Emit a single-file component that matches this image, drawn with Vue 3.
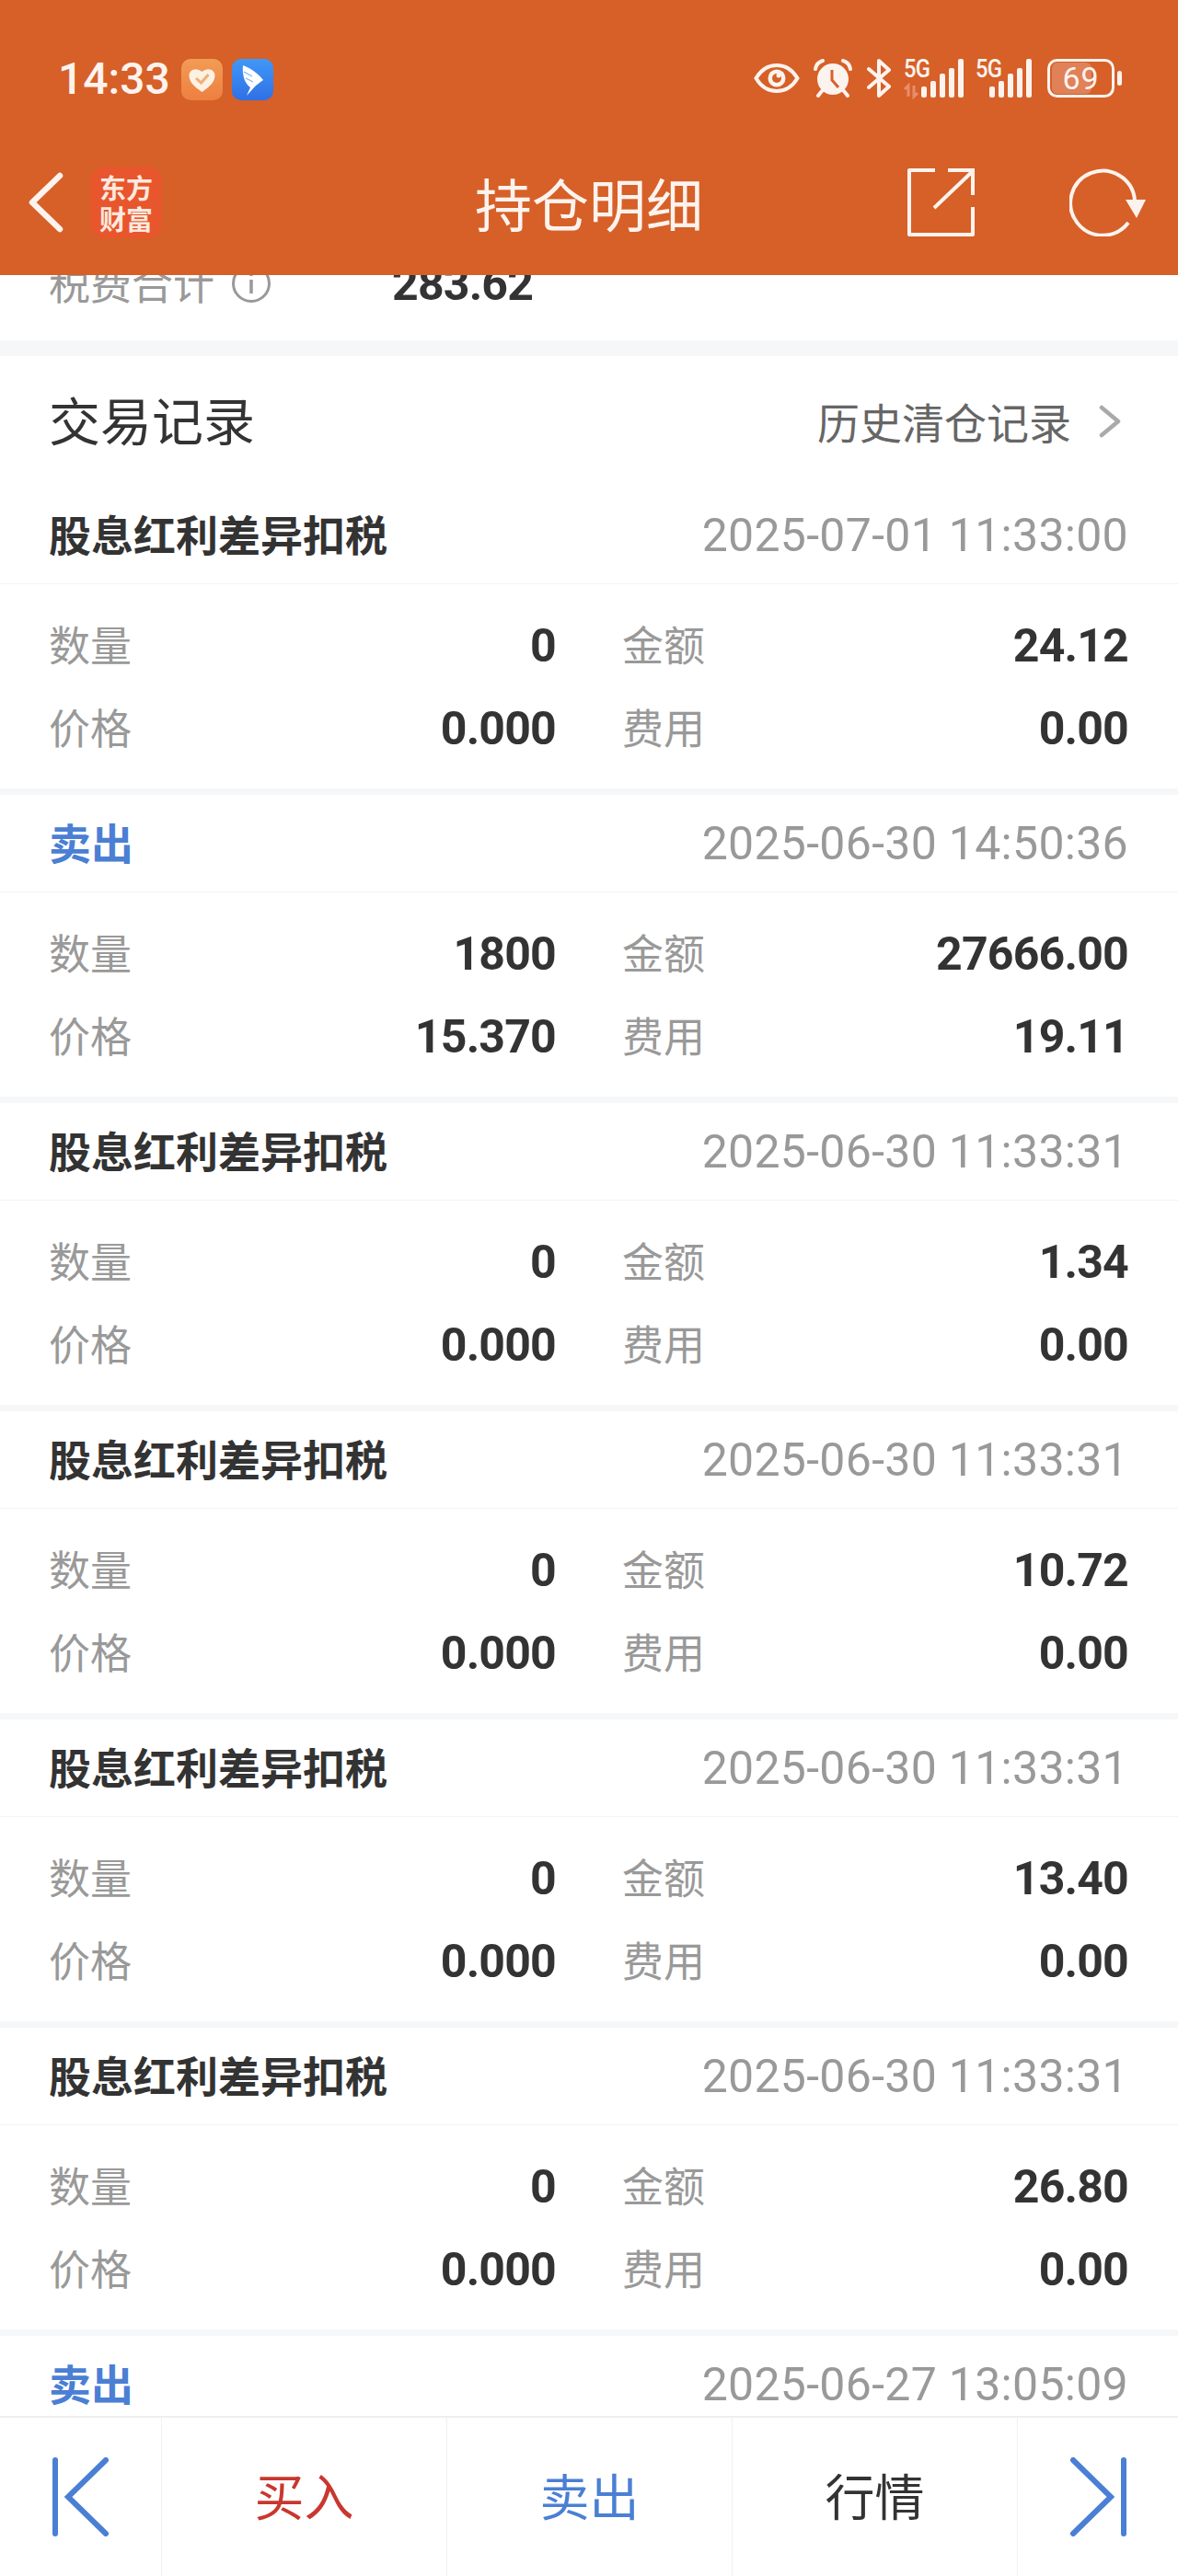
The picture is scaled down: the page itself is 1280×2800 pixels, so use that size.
<template>
  <div class="page">
    <header class="top">
      <div class="status">
        <div class="status-left">
          <span class="clock">14:33</span>
          <svg class="app-icon" viewBox="0 0 45 45">
            <defs>
              <linearGradient id="og" x1="0" y1="0" x2="0" y2="1"><stop offset="0" stop-color="#f29c56" /><stop offset="1" stop-color="#ee7f40" /></linearGradient>
            </defs>
            <rect width="45" height="45" rx="10" fill="url(#og)" />
            <path d="M22.5 36 C14 30 8.5 25 8.5 18 C8.5 12 16 8.5 22.5 14 C29 8.5 36.5 12 36.5 18 C36.5 25 31 30 22.5 36 Z" fill="#fdf1e4" />
            <path d="M16 21 L21.5 26 L29.5 17" fill="none" stroke="#efb075" stroke-width="3" />
          </svg>
          <svg class="app-icon" viewBox="0 0 45 45">
            <defs>
              <linearGradient id="bg" x1="0" y1="0" x2="0" y2="1"><stop offset="0" stop-color="#4098f6" /><stop offset="1" stop-color="#2f70e6" /></linearGradient>
            </defs>
            <rect width="45" height="45" rx="10" fill="url(#bg)" />
            <path d="M12 7 C20 10 29 16 34 23 C30 26 27 28 25 30 L16 40 L20 31 C14 27 11 18 12 7 Z" fill="#fff" />
            <path d="M13 14 L22 19 M15 21 L23 25" stroke="#7db4f7" stroke-width="1.2" />
          </svg>
        </div>
        <div class="status-right">
          <svg class="s-eye" viewBox="0 0 50 34">
            <path d="M2.5 17 C9 6 17 3 25 3 C33 3 41 6 47.5 17 C41 28 33 31 25 31 C17 31 9 28 2.5 17 Z" fill="none" stroke="#fdf3ee" stroke-width="4" />
            <circle cx="25" cy="17" r="9.5" fill="#fdf3ee" />
            <circle cx="25" cy="17" r="5" fill="#d66028" />
            <circle cx="27" cy="14" r="2.5" fill="#fdf3ee" />
          </svg>
          <svg class="s-alarm" viewBox="0 0 42 42">
            <circle cx="21" cy="22" r="17" fill="#fdf3ee" />
            <path d="M20 12 V23 L27 31" fill="none" stroke="#d66028" stroke-width="3" />
            <path d="M2 11 C3 6 6 3 10 2 M32 2 C36 3 39 6 40 11" fill="none" stroke="#fdf3ee" stroke-width="4" stroke-linecap="round" />
            <path d="M9 35 L5 40 M33 35 L37 40" stroke="#fdf3ee" stroke-width="4" stroke-linecap="round" />
          </svg>
          <svg class="s-bt" viewBox="0 0 28 42">
            <path d="M3 11 L25 30 L14 40 V2 L25 12 L3 31" fill="none" stroke="#fdf3ee" stroke-width="4" stroke-linejoin="round" stroke-linecap="round" />
          </svg>
          <svg class="s-signal" viewBox="0 0 66 42">
            <text x="0" y="20" transform="scale(0.85 1)" class="five-g">5G</text>
            <path d="M5 41 V29 L1 33 M11 29 V41 L15 37" fill="none" stroke="#e88d6c" stroke-width="3" />
            <rect x="19" y="30" width="6" height="12" rx="2" fill="#fdf3ee" />
            <rect x="29" y="24" width="6" height="18" rx="2" fill="#fdf3ee" />
            <rect x="39" y="16" width="6" height="26" rx="2" fill="#fdf3ee" />
            <rect x="49" y="10" width="6" height="32" rx="2" fill="#fdf3ee" />
            <rect x="59" y="0" width="6" height="42" rx="2" fill="#fdf3ee" />
          </svg>
          <svg class="s-signal2" viewBox="0 0 62 42">
            <text x="0" y="20" transform="scale(0.85 1)" class="five-g">5G</text>
            <rect x="15" y="30" width="6" height="12" rx="2" fill="#fdf3ee" />
            <rect x="25" y="24" width="6" height="18" rx="2" fill="#fdf3ee" />
            <rect x="35" y="16" width="6" height="26" rx="2" fill="#fdf3ee" />
            <rect x="45" y="10" width="6" height="32" rx="2" fill="#fdf3ee" />
            <rect x="55" y="0" width="6" height="42" rx="2" fill="#fdf3ee" />
          </svg>
          <svg class="s-battery" viewBox="0 0 82 42">
            <rect x="5" y="4" width="43" height="34" rx="6" fill="#e08158" />
            <rect x="1.5" y="1.5" width="70" height="39" rx="9" fill="none" stroke="#fdf3ee" stroke-width="3" />
            <rect x="76" y="13" width="5" height="16" rx="2.5" fill="#fdf3ee" />
            <text x="36.5" y="33" class="batt">69</text>
          </svg>
        </div>
      </div>
      <div class="nav">
        <div class="nav-left">
          <svg class="back" viewBox="0 0 40 66">
            <path d="M35 4 L5 33 L35 62" fill="none" stroke="#fdf3ee" stroke-width="6.5" stroke-linecap="round" stroke-linejoin="round" />
          </svg>
          <div class="logo">
            <span>东方</span>
            <span>财富</span>
          </div>
        </div>
        <div class="nav-title">持仓明细</div>
        <div class="nav-right">
          <svg class="share" viewBox="0 0 74 74">
            <path d="M31 2 H3 V72 H72 V42" fill="none" stroke="#fdf3ee" stroke-width="4" stroke-linejoin="round" />
            <path d="M30 43 L72 3 M45 2 H72 V29" fill="none" stroke="#fdf3ee" stroke-width="4" />
          </svg>
          <svg class="refresh" viewBox="0 0 84 74">
            <path d="M71 34 A35 35 0 1 0 64 59" fill="none" stroke="#fdf3ee" stroke-width="4" />
            <path d="M61 34 H83 L73 54 Z" fill="#fdf3ee" />
          </svg>
        </div>
      </div>
    </header>

    <main class="content">
      <div class="summary">
        <div class="summary-row">
          <span class="summary-label">税费合计</span>
          <svg class="info" viewBox="0 0 44 44">
            <circle cx="22" cy="22" r="19.5" fill="none" stroke="#999" stroke-width="3" />
            <path d="M22 18 V33 M22 10 V14" stroke="#999" stroke-width="3.5" />
          </svg>
          <span class="summary-value">283.62</span>
        </div>
      </div>
      <div class="thick-band"></div>

      <div class="section-head">
        <span class="section-title">交易记录</span>
        <span class="section-link">历史清仓记录</span>
        <svg class="link-arrow" viewBox="0 0 24 36">
          <path d="M3 3 L21 18 L3 33" fill="none" stroke="#aaa" stroke-width="4.5" stroke-linecap="round" stroke-linejoin="round" />
        </svg>
      </div>

      <section v-for="(item, i) in records" :key="i" class="record">
        <div class="record-head">
          <span class="record-type" :class="{ sell: item.type === '卖出' }">{{ item.type }}</span>
          <span class="record-time">{{ item.time }}</span>
        </div>
        <div class="record-body">
          <div class="cell"><span class="cell-label">数量</span><span class="cell-value">{{ item.qty }}</span></div>
          <div class="cell"><span class="cell-label">金额</span><span class="cell-value">{{ item.amount }}</span></div>
          <div class="cell"><span class="cell-label">价格</span><span class="cell-value">{{ item.price }}</span></div>
          <div class="cell"><span class="cell-label">费用</span><span class="cell-value">{{ item.fee }}</span></div>
        </div>
      </section>
    </main>

    <footer class="bottom">
      <div class="bottom-cell">
        <svg class="jump" viewBox="0 0 62 86">
          <path d="M3 3 V83 M58 3 L17 43 L58 83" fill="none" stroke="#4a7fd4" stroke-width="6" stroke-linecap="round" />
        </svg>
      </div>
      <div class="bottom-cell buy"><span>买入</span></div>
      <div class="bottom-cell sell-btn"><span>卖出</span></div>
      <div class="bottom-cell quote"><span>行情</span></div>
      <div class="bottom-cell">
        <svg class="jump" viewBox="0 0 62 86">
          <path d="M59 3 V83 M4 3 L45 43 L4 83" fill="none" stroke="#4a7fd4" stroke-width="6" stroke-linecap="round" />
        </svg>
      </div>
    </footer>
  </div>
</template>

<script setup>
const records = [
  { type: '股息红利差异扣税', time: '2025-07-01 11:33:00', qty: '0', amount: '24.12', price: '0.000', fee: '0.00' },
  { type: '卖出', time: '2025-06-30 14:50:36', qty: '1800', amount: '27666.00', price: '15.370', fee: '19.11' },
  { type: '股息红利差异扣税', time: '2025-06-30 11:33:31', qty: '0', amount: '1.34', price: '0.000', fee: '0.00' },
  { type: '股息红利差异扣税', time: '2025-06-30 11:33:31', qty: '0', amount: '10.72', price: '0.000', fee: '0.00' },
  { type: '股息红利差异扣税', time: '2025-06-30 11:33:31', qty: '0', amount: '13.40', price: '0.000', fee: '0.00' },
  { type: '股息红利差异扣税', time: '2025-06-30 11:33:31', qty: '0', amount: '26.80', price: '0.000', fee: '0.00' },
  { type: '卖出', time: '2025-06-27 13:05:09', qty: '', amount: '', price: '', fee: '' }
]
</script>

<style>
body {
  background: #fff;
}
</style>

<style scoped>
.page {
  width: 1280px;
  height: 2800px;
  display: flex;
  flex-direction: column;
  overflow: hidden;
  background: #fff;
  font-family: Roboto, "Noto Sans CJK SC", sans-serif;
}

/* 顶部橙色栏 */
.top {
  height: 299px;
  flex: none;
  background: #d66028;
  color: #fdf3ee;
}
.status {
  height: 141px;
  padding: 63px 60px 0 63px;
  box-sizing: border-box;
  display: flex;
  justify-content: space-between;
  align-items: flex-start;
}
.status-left {
  display: flex;
  align-items: center;
  height: 46px;
}
.clock {
  font-size: 48px;
  font-weight: 500;
  line-height: 46px;
  width: 134px;
}
.app-icon {
  width: 45px;
  height: 45px;
  margin-right: 10px;
}
.status-right {
  display: flex;
  align-items: center;
  height: 44px;
  gap: 15px;
}
.s-eye { width: 50px; height: 34px; }
.s-alarm { width: 42px; height: 42px; }
.s-bt { width: 28px; height: 42px; }
.s-signal { width: 66px; height: 42px; margin-left: -2px; overflow: visible; }
.s-signal2 { width: 62px; height: 42px; margin-left: -3px; overflow: visible; }
.s-battery { width: 82px; height: 42px; margin-left: 1px; }
.five-g {
  font-family: Roboto, sans-serif;
  font-size: 28px;
  font-weight: 500;
  fill: #fdf3ee;
  letter-spacing: -1px;
}
.batt {
  font-family: Roboto, sans-serif;
  font-size: 34px;
  fill: #fdf3ee;
  text-anchor: middle;
  letter-spacing: 1px;
}

.nav {
  height: 158px;
  display: grid;
  grid-template-columns: 1fr auto 1fr;
  align-items: center;
}
.nav-left {
  display: flex;
  align-items: center;
  padding-left: 30px;
}
.back {
  width: 40px;
  height: 66px;
}
.logo {
  width: 78px;
  height: 78px;
  margin-left: 28px;
  border-radius: 16px;
  background: #e8562d;
  display: flex;
  flex-direction: column;
  align-items: center;
  justify-content: center;
  gap: 2px;
  font-family: "Noto Sans CJK SC", sans-serif;
  font-size: 29px;
  font-weight: 700;
  color: #fde9df;
}
.logo span {
  display: block;
  height: 32px;
  line-height: 32px;
}
.nav-title {
  font-family: "Noto Sans CJK SC", sans-serif;
  font-size: 62px;
  line-height: 80px;
}
.nav-right {
  display: flex;
  align-items: center;
  justify-content: flex-end;
  padding-right: 34px;
  gap: 103px;
}
.share { width: 74px; height: 74px; }
.refresh { width: 84px; height: 74px; }

/* 可滚动内容 */
.content {
  flex: 1;
  min-height: 0;
  overflow: hidden;
}
.summary {
  height: 71px;
  overflow: hidden;
}
.summary-row {
  display: flex;
  align-items: center;
  height: 60px;
  margin-top: -20px;
  padding-left: 53px;
}
.summary-label {
  font-family: "Noto Sans CJK SC", sans-serif;
  font-size: 45px;
  color: #999;
  width: 198px;
  padding-bottom: 6px;
}
.info {
  width: 44px;
  height: 44px;
  margin-bottom: 3px;
}
.summary-value {
  margin-left: 131px;
  font-size: 50px;
  font-weight: 700;
  color: #333;
  letter-spacing: -0.8px;
}
.thick-band {
  height: 17px;
  background: #f5f7f9;
}
.section-head {
  height: 142px;
  padding: 0 62px 0 53px;
  box-sizing: border-box;
  display: flex;
  align-items: center;
}
.section-title {
  font-family: "Noto Sans CJK SC", sans-serif;
  font-size: 56px;
  color: #333;
  margin-right: auto;
  padding-bottom: 7px;
}
.section-link {
  font-family: "Noto Sans CJK SC", sans-serif;
  font-size: 46px;
  color: #666;
  padding-bottom: 2px;
}
.link-arrow {
  width: 24px;
  height: 36px;
  margin-left: 30px;
}

.record + .record {
  border-top: 7px solid #f5f7f9;
}
.record-head {
  height: 105px;
  padding: 0 54px 0 53px;
  display: flex;
  justify-content: space-between;
  align-items: center;
  border-bottom: 1px solid #f4f4f4;
}
.record-type {
  font-family: "Noto Sans CJK SC", sans-serif;
  font-size: 46px;
  font-weight: 700;
  color: #333;
  padding-bottom: 6px;
}
.record-type.sell {
  color: #4a7fd4;
}
.record-time {
  font-size: 50px;
  color: #999;
  letter-spacing: 0.3px;
}
.record-body {
  height: 222px;
  box-sizing: border-box;
  padding: 22px 54px 20px;
  display: grid;
  grid-template-columns: 1fr 1fr;
  grid-auto-rows: 90px;
  column-gap: 72px;
}
.cell {
  display: flex;
  justify-content: space-between;
  align-items: center;
}
.cell-label {
  font-family: "Noto Sans CJK SC", sans-serif;
  font-size: 45px;
  color: #999;
  padding-bottom: 5px;
}
.cell:nth-child(odd) .cell-label {
  margin-left: -1px;
}
.cell-value {
  font-size: 50px;
  font-weight: 700;
  color: #333;
  letter-spacing: -0.8px;
}

/* 底部操作栏 */
.bottom {
  height: 174px;
  flex: none;
  box-sizing: border-box;
  border-top: 2px solid #efefef;
  display: grid;
  grid-template-columns: 176px 310px 310px 310px 174px;
  background: #fff;
  font-family: "Noto Sans CJK SC", sans-serif;
  font-size: 54px;
}
.bottom-cell {
  display: flex;
  align-items: center;
  justify-content: center;
  border-right: 1px solid #f0f0f0;
}
.bottom-cell:last-child {
  border-right: none;
}
.bottom-cell span {
  padding-bottom: 6px;
}
.jump {
  width: 62px;
  height: 86px;
}
.buy { color: #c9372f; }
.sell-btn { color: #4a7fd4; }
.quote { color: #333; }
</style>
